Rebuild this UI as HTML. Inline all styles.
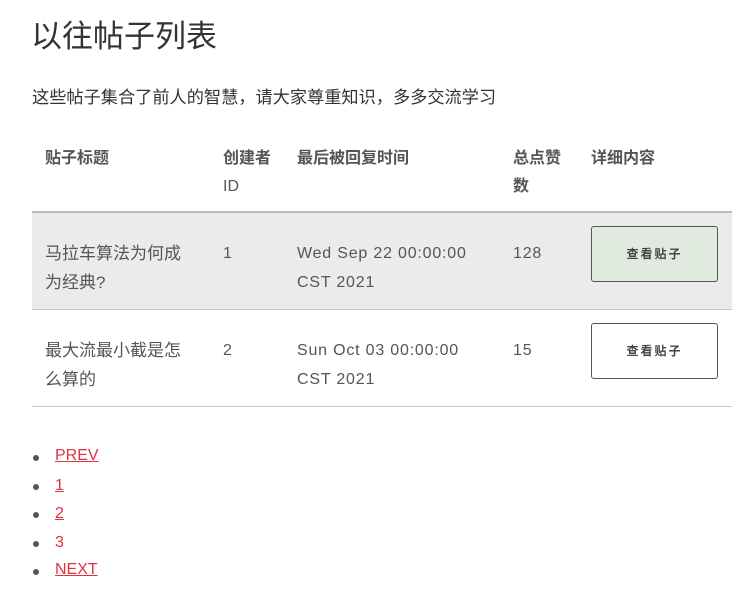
<!DOCTYPE html>
<html><head><meta charset="utf-8"><style>
*{margin:0;padding:0;box-sizing:border-box}
body{width:756px;height:609px;background:#fff;font-family:"Liberation Sans","Noto Sans CJK SC",sans-serif;color:#333;position:relative;overflow:hidden}
.a{position:absolute;white-space:nowrap}
h1{position:absolute;left:31px;top:17px;font-size:31px;font-weight:normal;color:#333;line-height:40px}
.sub{left:32px;top:86px;font-size:17.2px;line-height:22px;color:#333}
.th{font-size:16px;font-weight:bold;color:#555;line-height:28px}
.td{font-size:17px;color:#555;line-height:29px}
.en{font-size:16px;letter-spacing:0.8px}
.btn{position:absolute;left:591px;width:127px;height:56px;border:1px solid #555;border-radius:3px;font-size:12px;font-weight:bold;letter-spacing:2px;color:#444;text-align:center;line-height:54px}
.li{position:absolute;left:55px;font-size:16px;color:#e0313e;text-decoration:underline;line-height:20px}
.dot{position:absolute;left:33px;width:6px;height:6px;border-radius:50%;background:#555}
</style></head><body>
<h1>以往帖子列表</h1>
<div class="a sub">这些帖子集合了前人的智慧，请大家尊重知识，多多交流学习</div>

<div class="a th" style="left:45px;top:145px">贴子标题</div>
<div class="a th" style="left:223px;top:145px;white-space:normal;width:60px">创建者<br><span style="font-weight:normal">ID</span></div>
<div class="a th" style="left:297px;top:145px">最后被回复时间</div>
<div class="a th" style="left:513px;top:145px;white-space:normal;width:60px">总点赞<br>数</div>
<div class="a th" style="left:591px;top:145px">详细内容</div>

<div class="a" style="left:32px;top:211px;width:700px;height:2px;background:#bbb"></div>
<div class="a" style="left:32px;top:213px;width:700px;height:96px;background:#ebebeb"></div>
<div class="a" style="left:32px;top:309px;width:700px;height:1px;background:#c8c8c8"></div>
<div class="a" style="left:32px;top:406px;width:700px;height:1px;background:#c8c8c8"></div>

<div class="a td" style="left:45px;top:239px">马拉车算法为何成<br>为经典?</div>
<div class="a td en" style="left:223px;top:239px">1</div>
<div class="a td en" style="left:297px;top:239px">Wed Sep 22 00:00:00<br>CST 2021</div>
<div class="a td en" style="left:513px;top:239px">128</div>
<div class="btn" style="top:226px;background:#e0eadf">查看贴子</div>

<div class="a td" style="left:45px;top:336px">最大流最小截是怎<br>么算的</div>
<div class="a td en" style="left:223px;top:336px">2</div>
<div class="a td en" style="left:297px;top:336px">Sun Oct 03 00:00:00<br>CST 2021</div>
<div class="a td en" style="left:513px;top:336px">15</div>
<div class="btn" style="top:323px;background:#fff">查看贴子</div>

<div class="dot" style="top:455px"></div><div class="li" style="top:446px">PREV</div>
<div class="dot" style="top:484px"></div><div class="li" style="top:476px">1</div>
<div class="dot" style="top:512px"></div><div class="li" style="top:504px">2</div>
<div class="dot" style="top:541px"></div><div class="li" style="top:533px;text-decoration:none">3</div>
<div class="dot" style="top:569px"></div><div class="li" style="top:560px">NEXT</div>
</body></html>
